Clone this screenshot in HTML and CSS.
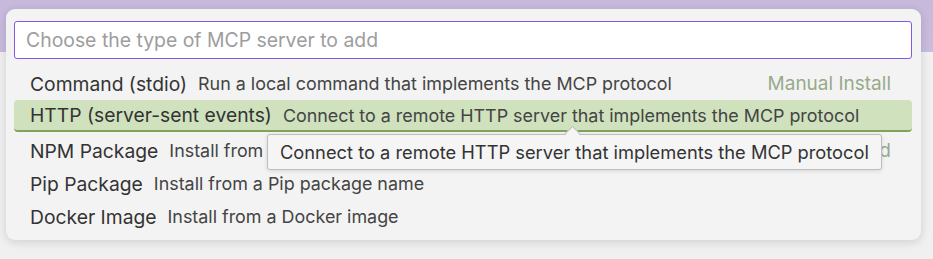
FILE: index.html
```html
<!DOCTYPE html>
<html lang="en">
<head>
  <meta charset="UTF-8">
  <title>Add MCP Server</title>
  <link rel="stylesheet" href="styles.css">
</head>
<body>
  <div class="picker">
    <input class="picker-input" type="text" placeholder="Choose the type of MCP server to add">

    <ul class="options">
      <li class="option">
        <span class="label">Command (stdio)</span>
        <span class="desc">Run a local command that implements the MCP protocol</span>
        <span class="hint">Manual Install</span>
      </li>
      <li class="option selected">
        <span class="label">HTTP (server-sent events)</span>
        <span class="desc">Connect to a remote HTTP server that implements the MCP protocol</span>
        <!-- hover tooltip -->
        <div class="tooltip">Connect to a remote HTTP server that implements the MCP protocol</div>
      </li>
      <li class="option">
        <span class="label">NPM Package</span>
        <span class="desc">Install from an NPM package</span>
        <span class="hint">Recommended</span>
      </li>
      <li class="option">
        <span class="label">Pip Package</span>
        <span class="desc">Install from a Pip package name</span>
      </li>
      <li class="option">
        <span class="label">Docker Image</span>
        <span class="desc">Install from a Docker image</span>
      </li>
    </ul>
  </div>
</body>
</html>
```

FILE: styles.css
```css
body {
  margin: 0;
  height: 259px;
  font-family: Inter, "Noto Sans", sans-serif;
  background: linear-gradient(#c6b9dc 0, #c9bcde 52px, #f0f0f0 52px);
  padding: 9px 12px 0 6px;
  box-sizing: border-box;
}
.picker {
  background-color: #f3f3f3;
  border-radius: 9px;
  box-shadow: 0 2px 10px rgba(0, 0, 0, 0.14);
  padding: 12px 9px 12px 8px;
  height: 231px;
  box-sizing: border-box;
}
.picker-input {
  display: block;
  width: 100%;
  box-sizing: border-box;
  height: 38px;
  border: 1.5px solid #8758db;
  border-radius: 3px;
  background: #fff;
  padding: 0 11px;
  font-family: inherit;
  font-size: 19.4px;
  color: #333;
  outline: none;
}
.picker-input::placeholder {
  color: #9d9d9d;
}
.options {
  list-style: none;
  margin: 8px 0 0;
  padding: 0;
}
.option {
  position: relative;
  display: flex;
  align-items: center;
  height: 33px;
  padding: 0 21px 0 16px;
  color: #333;
}
.label {
  font-size: 19.3px;
  margin-right: 11px;
}
.desc {
  font-size: 17.9px;
  color: #444;
}
.hint {
  margin-left: auto;
  font-size: 19px;
  color: #98aa8b;
}
.selected {
  height: 30px;
  margin-bottom: 2px;
  background-color: #cfe1bd;
  border-radius: 4px;
  border-bottom: 2px solid #7ea35c;
}
.tooltip {
  position: absolute;
  left: 253px;
  top: 34px;
  z-index: 2;
  padding: 0 12px;
  height: 34px;
  line-height: 34px;
  background-color: #f5f5f5;
  border: 1px solid #bdbdbd;
  border-radius: 3px;
  box-shadow: 0 1px 4px rgba(0, 0, 0, 0.12);
  font-size: 18.3px;
  color: #333;
  white-space: nowrap;
}
.tooltip::before {
  content: "";
  position: absolute;
  left: 299px;
  top: -7px;
  width: 10px;
  height: 10px;
  background-color: #f5f5f5;
  border-left: 1px solid #bdbdbd;
  border-top: 1px solid #bdbdbd;
  transform: rotate(45deg);
}
```
